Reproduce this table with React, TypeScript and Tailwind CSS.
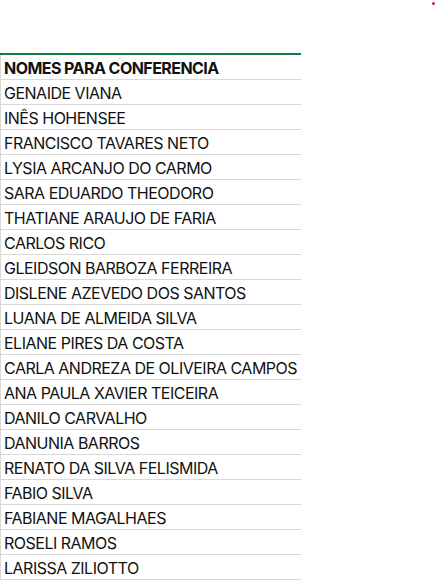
const nomes = [
  'GENAIDE VIANA',
  'INÊS HOHENSEE',
  'FRANCISCO TAVARES NETO',
  'LYSIA ARCANJO DO CARMO',
  'SARA EDUARDO THEODORO',
  'THATIANE ARAUJO DE FARIA',
  'CARLOS RICO',
  'GLEIDSON BARBOZA FERREIRA',
  'DISLENE AZEVEDO DOS SANTOS',
  'LUANA DE ALMEIDA SILVA',
  'ELIANE PIRES DA COSTA',
  'CARLA ANDREZA DE OLIVEIRA CAMPOS',
  'ANA PAULA XAVIER TEICEIRA',
  'DANILO CARVALHO',
  'DANUNIA BARROS',
  'RENATO DA SILVA FELISMIDA',
  'FABIO SILVA',
  'FABIANE MAGALHAES',
  'ROSELI RAMOS',
  'LARISSA ZILIOTTO',
];

export default function App() {
  return (
    <div className="relative w-[438px] h-[584px] bg-white overflow-hidden font-['Inter',sans-serif] text-[#111]">
      {/* marcador vermelho */}
      <div className="absolute left-[432px] top-[2px] w-[3px] h-[3px] rounded-full bg-[#e81123]" />

      <div className="pt-[53px]">
        <div className="w-[301px] border-t-2 border-[#107c41]">
          <div className="h-[25px] flex items-center pt-[1px] pl-[3px] border-b border-l border-[#d9d9d9] text-[16px] font-bold tracking-[-0.55px] whitespace-nowrap">
            NOMES PARA CONFERENCIA
          </div>
          {nomes.map((n) => (
            <div
              key={n}
              className="h-[25px] flex items-center pt-[1px] pl-[3px] border-b border-l border-[#d9d9d9] text-[16px] tracking-[-0.5px] whitespace-nowrap"
            >
              {n}
            </div>
          ))}
        </div>
      </div>
    </div>
  );
}
